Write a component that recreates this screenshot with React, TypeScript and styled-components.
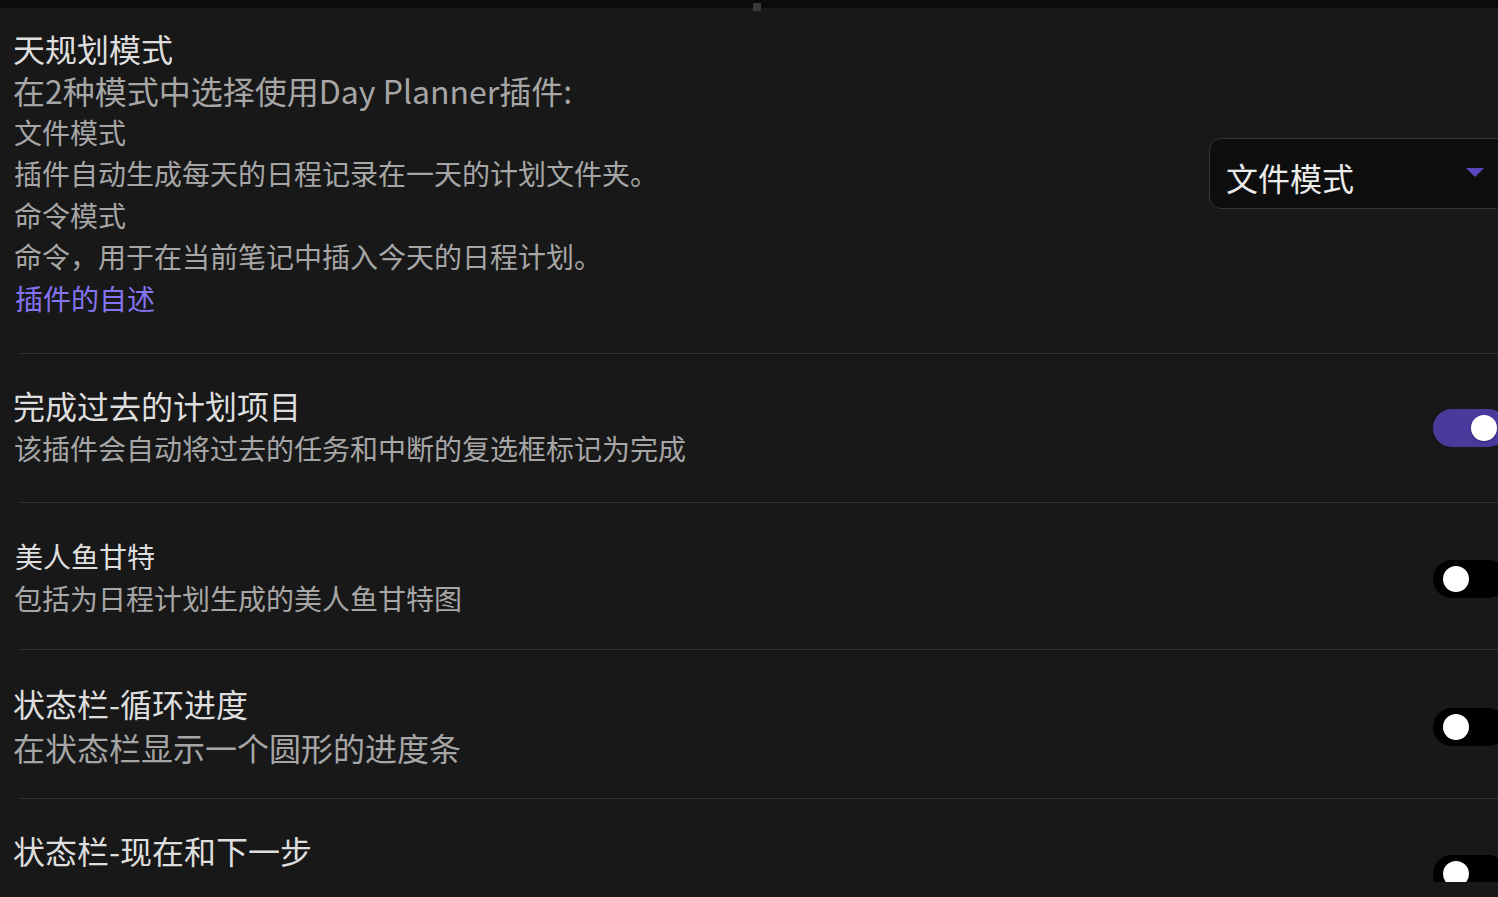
import React from "react";
import styled, { createGlobalStyle } from "styled-components";

const Global = createGlobalStyle`
  html, body { margin: 0; padding: 0; background: #181818; overflow: hidden; }
  body { font-family: "Noto Sans CJK SC", "Noto Sans", sans-serif; }
`;

const Page = styled.div`
  width: 1498px;
  height: 897px;
  background: #181818;
  overflow: hidden;
  display: flex;
  flex-direction: column;
`;

const TopBar = styled.div`
  height: 8px;
  flex: none;
  background: #0b0b0b;
  position: relative;
`;

const Grip = styled.div`
  position: absolute;
  left: 753px;
  top: 3px;
  width: 8px;
  height: 8px;
  background: #3a3a3a;
`;

const Scroller = styled.div`
  height: 874px;
  flex: none;
  overflow: hidden;
  width: 1498px;
`;

const List = styled.div`
  width: 1507px;
  display: flex;
  flex-direction: column;
`;

const Row = styled.div<{ $top?: number; $bottom?: number }>`
  display: flex;
  align-items: center;
  justify-content: space-between;
  padding: ${(p) => p.$top ?? 30}px 0 ${(p) => p.$bottom ?? 32}px 13px;
`;

const Info = styled.div<{ $tall?: boolean }>`
  display: flex;
  flex-direction: column;
  min-height: ${(p) => (p.$tall ? "86px" : "0")};
`;

const Title = styled.div<{ $small?: boolean }>`
  font-size: ${(p) => (p.$small ? "28px" : "32px")};
  line-height: 42px;
  color: #dedede;
  margin-left: ${(p) => (p.$small ? "2px" : "0")};
`;

const Desc = styled.div<{ $big?: boolean; $gap?: number }>`
  font-size: ${(p) => (p.$big ? "32px" : "28px")};
  line-height: 41.6px;
  color: #a6a6a6;
  margin-left: ${(p) => (p.$big ? "0" : "1px")};
  margin-top: ${(p) => p.$gap ?? 0}px;
`;

const Link = styled.a`
  font-size: 28px;
  line-height: 41.6px;
  color: #8474f2;
  text-decoration: none;
  margin-left: 2px;
`;

const Divider = styled.div`
  height: 1px;
  margin-left: 20px;
  background: #303030;
`;

const Select = styled.div`
  width: 298px;
  height: 71px;
  box-sizing: border-box;
  border: 1px solid #353535;
  border-radius: 12px;
  background: #0e0e0e;
  display: flex;
  align-items: center;
  padding: 6px 22px 0 16px;
  justify-content: space-between;
  color: #ececec;
  font-size: 32px;
  margin-top: 1px;
`;

const Caret = styled.svg`
  width: 18px;
  height: 9px;
  margin-top: -8px;
`;

const Toggle = styled.div<{ $on?: boolean }>`
  width: 74px;
  height: 38px;
  border-radius: 19px;
  background: ${(p) => (p.$on ? "#4a3a9c" : "#000")};
  display: flex;
  align-items: center;
  padding: 0 10px;
  box-sizing: border-box;
  flex: none;
  margin-top: 3px;
`;

const Knob = styled.div<{ $on?: boolean }>`
  width: 26px;
  height: 26px;
  border-radius: 50%;
  background: #fff;
  box-shadow: 0 1px 2px rgba(0, 0, 0, 0.3);
  transform: translateX(${(p) => (p.$on ? "28px" : "0")});
`;

export default function App() {
  return (
    <Page>
      <Global />
      <TopBar>
        <Grip />
      </TopBar>
      <Scroller>
        <List>
          <Row $top={19} $bottom={33}>
            <Info>
              <Title>天规划模式</Title>
              <Desc $big $gap={1}>在2种模式中选择使用Day Planner插件:</Desc>
              <Desc>文件模式</Desc>
              <Desc>插件自动生成每天的日程记录在一天的计划文件夹。</Desc>
              <Desc>命令模式</Desc>
              <Desc>命令，用于在当前笔记中插入今天的日程计划。</Desc>
              <Link href="#">插件的自述</Link>
            </Info>
            <Select>
              <span>文件模式</span>
              <Caret viewBox="0 0 18 9">
                <path d="M0 0 L18 0 L9 9 Z" fill="#5a47c0" />
              </Caret>
            </Select>
          </Row>
          <Divider />
          <Row $top={30} $bottom={33}>
            <Info>
              <Title>完成过去的计划项目</Title>
              <Desc $gap={2}>该插件会自动将过去的任务和中断的复选框标记为完成</Desc>
            </Info>
            <Toggle $on>
              <Knob $on />
            </Toggle>
          </Row>
          <Divider />
          <Row $top={32} $bottom={29}>
            <Info>
              <Title $small>美人鱼甘特</Title>
              <Desc $gap={1}>包括为日程计划生成的美人鱼甘特图</Desc>
            </Info>
            <Toggle>
              <Knob />
            </Toggle>
          </Row>
          <Divider />
          <Row $top={32} $bottom={30}>
            <Info>
              <Title>状态栏-循环进度</Title>
              <Desc $big $gap={3}>在状态栏显示一个圆形的进度条</Desc>
            </Info>
            <Toggle>
              <Knob />
            </Toggle>
          </Row>
          <Divider />
          <Row>
            <Info $tall>
              <Title>状态栏-现在和下一步</Title>
            </Info>
            <Toggle>
              <Knob />
            </Toggle>
          </Row>
        </List>
      </Scroller>
    </Page>
  );
}
